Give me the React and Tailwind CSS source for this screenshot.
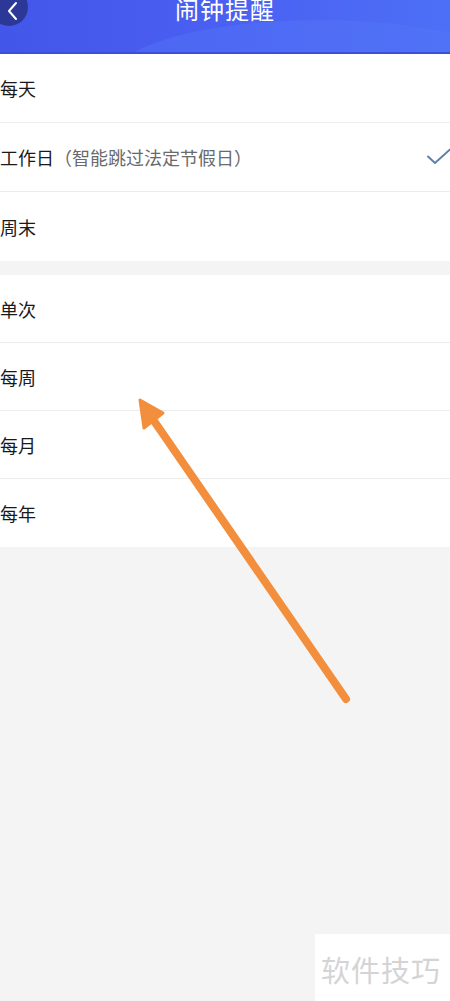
import React from 'react'

const font = { fontFamily: '"Noto Sans CJK SC", "Noto Sans", sans-serif' }

function Row({ label, note, checked, last, tall }) {
  return (
    <div className={`flex items-center justify-between ${tall ? 'h-[69px]' : 'h-[68px]'} ${last ? '' : 'border-b border-[#ececec]'}`}>
      <div className="text-[18px] text-[#1a1a1a] leading-none">
        {label}
        {note && <span className="text-[#6a6a6a]">{note}</span>}
      </div>
      {checked && (
        <svg width="26" height="18" viewBox="0 0 26 18" className="mr-[-2px]">
          <path d="M2 8.5 L9 15 L24 1.5" fill="none" stroke="#5b83ac" strokeWidth="2" strokeLinecap="round" strokeLinejoin="round" />
        </svg>
      )}
    </div>
  )
}

export default function App() {
  return (
    <div className="relative w-[450px] h-[1001px] overflow-hidden bg-[#f4f4f4]" style={font}>
      <header className="relative h-[54px] overflow-hidden bg-gradient-to-r from-[#4356ea] via-[#4a60f2] to-[#4d6ff6] border-b-2 border-[#3b4fd8]">
        <div className="absolute right-[-80px] top-[20px] w-[420px] h-[120px] rounded-[50%] bg-[#5577f7] opacity-40" />
        <div className="absolute left-[-10px] top-[-12px] w-[38px] h-[38px] rounded-full bg-[#2b3898] flex items-center justify-center">
          <svg width="14" height="22" viewBox="0 0 14 22" className="ml-[8px] mt-[8px]">
            <path d="M10 3 L3 11 L10 19" fill="none" stroke="#fff" strokeWidth="2" strokeLinecap="round" strokeLinejoin="round" />
          </svg>
        </div>
        <div className="relative text-center text-white text-[24px] leading-none mt-[-3px] tracking-[1px]">闹钟提醒</div>
      </header>

      <div className="bg-white">
        <Row label="每天" tall />
        <Row label="工作日" note="（智能跳过法定节假日）" checked tall />
        <Row label="周末" last tall />
      </div>

      <div className="h-[14px]" />

      <div className="bg-white">
        <Row label="单次" />
        <Row label="每周" />
        <Row label="每月" />
        <Row label="每年" last />
      </div>

      <svg className="absolute left-0 top-0 pointer-events-none" width="450" height="1001">
        <line x1="346" y1="699" x2="152" y2="418" stroke="#f28e3c" strokeWidth="8" strokeLinecap="round" />
        <polygon points="140,400 163,413 144,428" fill="#f28e3c" stroke="#f28e3c" strokeWidth="3" strokeLinejoin="round" />
      </svg>

      <div className="absolute left-[315px] top-[934px] w-[140px] h-[70px] bg-white flex items-center pl-[6px]">
        <span className="text-[29px] text-[#d4d4d4] tracking-[1px] leading-none">软件技巧</span>
      </div>
    </div>
  )
}
